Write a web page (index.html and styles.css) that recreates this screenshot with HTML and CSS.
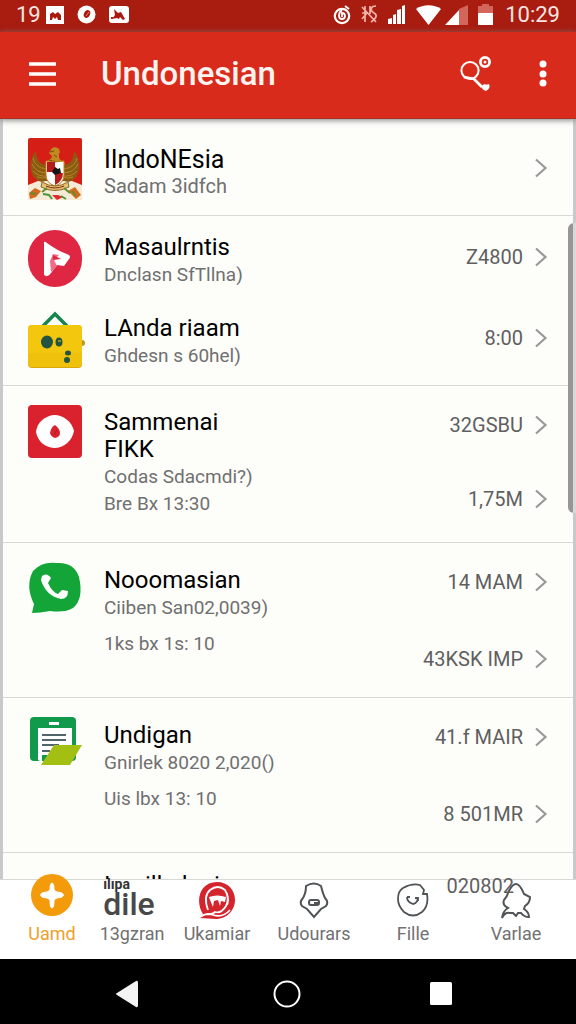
FILE: index.html
```html
<!DOCTYPE html>
<html lang="id">
<head>
<meta charset="utf-8">
<meta name="viewport" content="width=device-width, initial-scale=1">
<title>Undonesian</title>
<link rel="stylesheet" href="styles.css">
</head>
<body>
<svg class="defs" aria-hidden="true">
  <symbol id="chevron" viewBox="0 0 14 20"><path d="M2 1.500 11.500 10 2 18.500" fill="none" stroke="#999" stroke-width="2.200"/></symbol>
</svg>

<div class="status">
  <div class="status-left">
    <span>19</span>
    <svg width="18" height="18" viewBox="0 0 18 18"><path fill="#fff" d="M0 0h18v18H0z"/><path fill="#a9190f" d="M4 14V8l3-2 2 2 3-2 3 3v5h-3l-1-3-2 2-2-2-1 3z"/></svg>
    <svg width="19" height="19" viewBox="0 0 19 19"><circle cx="9.500" cy="9.500" r="9" fill="#fff"/><ellipse cx="10" cy="9" rx="3" ry="4" transform="rotate(25 10 9)" fill="#a9190f"/><path d="m9 11 3-4" stroke="#d98a82"/></svg>
    <svg width="20" height="18" viewBox="0 0 20 18"><rect width="20" height="17" rx="3" fill="#fff"/><path fill="#a9190f" d="m5 3 4 4 3-1 4 7-2 1-3-3-1 2-2-1-5 1 3-4zM2 11h2v2H2z"/></svg>
  </div>
  <div class="status-right">
    <svg width="18" height="20" viewBox="0 0 18 20" fill="none" stroke="#fff"><circle cx="9" cy="11" r="7.200" stroke-width="2.200"/><path d="M9 5c-4 3-4 9 0 9s4-6 0-6v4" stroke-width="1.800"/><path d="M12 1l4 3" stroke-width="2"/></svg>
    <svg width="17" height="19" viewBox="0 0 17 19" fill="none" stroke="#f0b3ab" stroke-width="1.700"><path d="m1 2 14 15M4 1v16M1 8h6M1 14l5-6M15 1c-6 0-6 5-2 7s2 6-3 9M9 1v8"/></svg>
    <svg width="18" height="19" viewBox="0 0 18 19" fill="#fff"><path d="M0 14l4-1v6H0zM5 10l3-1v10H5zM9 5l4-1v15H9zM14 1l3-1v19h-3z"/></svg>
    <svg class="wifi" width="25" height="20" viewBox="0 0 25 20"><path fill="#fff" d="M0 4C7-1 18-1 25 4L12.500 20z"/></svg>
    <svg width="23" height="20" viewBox="0 0 23 20"><path fill="#d2665b" d="M14 4 23 0v20h-9z"/><path fill="#fff" d="M0 20 14 5v15z"/></svg>
    <svg class="battery" width="15" height="21" viewBox="0 0 15 21"><path fill="#d2665b" d="M4 0h7v2h4v8H0V2h4z"/><path fill="#fff" d="M0 9h15v12H0z"/></svg>
    <span>10:29</span>
  </div>
</div>

<header class="appbar">
  <button class="icon-button" aria-label="Menu"><svg width="28" height="24" viewBox="0 0 28 24"><path d="M1 2h27M1 12h27M1 22h27" stroke="#fff" stroke-width="3.600"/></svg></button>
  <h1>Undonesian</h1>
  <button class="icon-button search" aria-label="Search"><svg width="32" height="38" viewBox="0 0 32 38" fill="none" stroke="#fff"><circle cx="10" cy="15.500" r="8.600" stroke-width="2"/><path d="m4 22 10 2 8 8" stroke-width="2.800"/><circle cx="25" cy="7" r="4.600" stroke-width="2.800"/><circle cx="25" cy="7" r="1.500" fill="#fff" stroke="none"/><path d="M21 31q2 0 3-2 2 1 5 0 2 4-3 7-4-1-5-5z" fill="#fff" stroke="none"/></svg></button>
  <button class="icon-button" aria-label="More"><svg width="8" height="28" viewBox="0 0 8 28" fill="#fff"><circle cx="4" cy="4" r="3.500"/><circle cx="4" cy="14" r="3.500"/><circle cx="4" cy="23" r="3.500"/></svg></button>
</header>

<main class="list">
  <section class="group intro">
    <article class="item">
      <svg class="icon" width="54" height="62" viewBox="0 0 54 62">
        <rect width="54" height="60" rx="2" fill="#d51f16"/>
        <path d="M0 47l10-4h34l10 4v15H0z" fill="#f5ead6"/>
        <g fill="#8a5c13"><path d="M19 26C13 28 8 22 8 13 0 23 1 36 9 42c4 3 8 2 12-1zM35 26c6 2 11-4 11-13 8 10 7 23-1 29-4 3-8 2-12-1z"/></g>
        <g fill="none" stroke="#b98425" stroke-width="1"><path d="M5 20q2 10 14 11M4 26q4 9 15 9M5 33q5 6 15 5M9 39q5 2 12 0M49 20q-2 10-14 11M50 26q-4 9-15 9M49 33q-5 6-15 5M45 39q-5 2-12 0"/></g>
        <path d="M18 26c1-5 6-4 6-8l-3-3 3-5q4-2 7 1l1 3q-2 2-1 5c0 4 5 3 6 7L27 29z" fill="#c08a20"/>
        <path d="M22 14l4-1M26 17l3 2M21 22l12 3" stroke="#745010"/>
        <path d="M18 23q9 2 18 0v14q0 8-9 11-9-3-9-11z" fill="#fff" stroke="#b9801d"/>
        <path d="M19 24h8v10h-8zM27 35h8q0 8-8 12z" fill="#b8191a"/><path d="m27 29 3 2 2-1 1 5-6 2-3-3z" fill="#151515"/>
        <path d="M14 44q13 8 26 0l1 5q-14 7-28 0z" fill="#e4c170" stroke="#8f6a2a"/><path d="M18 48q9 4 18 0" stroke="#7e2b14" fill="none"/>
        <path d="M1 55l6-5 6 3-5 6-6 2zM40 53l7-4 6 8-5 4z" fill="#d26a20"/><path d="M3 54q2 3 5 1M44 53l4 5M14 54l5-4M36 50l6 5" stroke="#5f8e2c" stroke-width="2" fill="none"/>
        <path d="M24 57h6l5 2-6 3z" fill="#e02b2f"/><path d="M15 56l6 1 3 4M33 58l5 3" stroke="#4b983a" stroke-width="2" fill="none"/>
      </svg>
      <div class="text"><h2>IIndoNEsia</h2><p>Sadam 3idfch</p></div>
      <div class="values"><a href="#" aria-label="Open"><svg class="chev"><use href="#chevron"/></svg></a></div>
    </article>
  </section>

  <section class="group pair">
    <article class="item">
      <svg class="icon" width="54" height="58" viewBox="0 0 54 58"><rect width="54" height="57" rx="27" fill="#df2744"/><path d="M16 12q1-1 3 1 9 7 22 12 2 2 0 4l-5 7-7-1-6 8q-3 5-7 2z" fill="#fff"/><path d="m31 25-6-1-3 7 1 11 6-6-3-6z" fill="#ee6f85"/><path d="m25 25 8 4-8 1z" fill="#df2744"/></svg>
      <div class="text"><h2>Masaulrntis</h2><p>Dnclasn SfTllna)</p></div>
      <div class="values"><a href="#">Z4800<svg class="chev"><use href="#chevron"/></svg></a></div>
    </article>
    <article class="item">
      <svg class="icon wide" width="56" height="58" viewBox="0 0 56 58"><path d="m15 15 12-12 12 12" fill="none" stroke="#16864d" stroke-width="3.500"/><circle cx="54" cy="32" r="3" fill="#bd9820"/><rect y="14" width="54" height="43" rx="4" fill="#d9a60b"/><rect y="14" width="54" height="42" rx="4" fill="#f3c70d"/><path d="M0 42h54v10q0 4-4 4H4q-4 0-4-4z" fill="#efc00c"/><g fill="#24533f"><ellipse cx="19" cy="31" rx="6" ry="6.500"/><ellipse cx="31" cy="31" rx="3.500" ry="4.500"/><ellipse cx="40" cy="42" rx="3" ry="2.500"/><ellipse cx="39" cy="49" rx="3" ry="3"/></g><path d="M30 30h3" stroke="#f3c70d"/></svg>
      <div class="text"><h2>LAnda riaam</h2><p>Ghdesn s 60hel)</p></div>
      <div class="values"><a href="#">8:00<svg class="chev"><use href="#chevron"/></svg></a></div>
    </article>
  </section>

  <section class="group tall">
    <article class="item">
      <svg class="icon" width="54" height="54" viewBox="0 0 54 54"><rect width="54" height="53" rx="4" fill="#d9222d"/><path d="M8 27C9 17 17 11 26 10 36 10 44 17 46 26 44 36 36 43 26 43 17 42 10 37 8 27z" fill="#fff"/><path d="M27 20q5 4 5 8t-5 5q-4-1-5-5 1-6 5-8z" fill="#d9222d"/><path d="m26 30 3-5" stroke="#a91d25"/></svg>
      <div class="text"><h2>Sammenai<br>FIKK</h2><p>Codas Sdacmdi?)</p><p>Bre Bx 13:30</p></div>
      <div class="values"><a href="#">32GSBU<svg class="chev"><use href="#chevron"/></svg></a><a href="#">1,75M<svg class="chev"><use href="#chevron"/></svg></a></div>
    </article>
  </section>

  <section class="group tall spaced">
    <article class="item">
      <svg class="icon" width="54" height="54" viewBox="0 0 54 54"><path d="M4 51 6 42Q-3 24 5 9 14-1 29 1q17-1 22 14 5 22-6 31-8 5-23 3-10 2-18 2z" fill="#13a538"/><path d="M14 14q5-4 9 2l-3 5q4 9 10 11l4-4 6 1q0 8-7 8Q18 34 13 18z" fill="#fff"/></svg>
      <div class="text"><h2>Nooomasian</h2><p>Ciiben San02,0039)</p><p>1ks bx 1s: 10</p></div>
      <div class="values"><a href="#">14 MAM<svg class="chev"><use href="#chevron"/></svg></a><a href="#">43KSK IMP<svg class="chev"><use href="#chevron"/></svg></a></div>
    </article>
  </section>

  <section class="group tall spaced">
    <article class="item">
      <svg class="icon wide" width="56" height="54" viewBox="0 0 56 54"><rect x="2" width="46" height="44" rx="4" fill="#119a4c"/><path d="M21 5h10v3H21z" fill="#fff"/><path d="M10 11h34v27H14v7l-4-2z" fill="#fff"/><path d="M14 18h24M14 23h24M14 28h17M14 34h8" stroke="#53656c" stroke-width="2"/><path d="M26 28h28L42 48H13z" fill="#a3bf12"/></svg>
      <div class="text"><h2>Undigan</h2><p>Gnirlek 8020 2,020()</p><p>Uis lbx 13: 10</p></div>
      <div class="values"><a href="#">41.f MAIR<svg class="chev"><use href="#chevron"/></svg></a><a href="#">8 501MR<svg class="chev"><use href="#chevron"/></svg></a></div>
    </article>
  </section>

  <section class="group last">
    <article class="item"><div class="icon blank"></div><div class="text"><h2>Inarilkalani</h2></div></article>
  </section>
</main>
<div class="scroll-thumb"></div>

<nav class="tabs">
  <a class="tab active" href="#"><span class="glyph"><svg width="42" height="44" viewBox="0 0 42 44"><circle cx="21" cy="22" r="21" fill="#f49b0b"/><path d="M21 10q2 0 2 7 1 2 8 3 3 2 0 4-7 1-8 3 0 8-2 8t-2-8q-1-2-8-3-3-2 0-4 7-1 8-3 0-7 2-7z" fill="#fff" stroke="#fff"/></svg></span><span>Uamd</span></a>
  <a class="tab" href="#"><span class="glyph word">dile<small>ılıpa</small></span><span>13gzran</span></a>
  <a class="tab" href="#"><span class="glyph"><svg width="38" height="38" viewBox="0 0 38 38"><path d="M19 0c11 0 18 8 18 18S29 37 18 37l-16-1 3-4C-3 20 1 0 19 0z" fill="#d4252e"/><path d="M10 28Q5 14 12 8q8-6 15 0 5 8 1 16-5 8-11 6-3 3-8 2M2 35q8-5 13-2 10 3 17-5M29 12q2 6 0 11" fill="none" stroke="#fff" stroke-width="1.800"/><path d="M11 15q8-3 17 0l-1 5-4-1-1 5-2-6-4 1-1 6-3-7z" fill="#fff"/></svg></span><span>Ukamiar</span></a>
  <a class="tab" href="#"><span class="glyph"><svg width="30" height="38" viewBox="0 0 30 38" fill="none" stroke="#505456" stroke-width="2"><path d="M7 4q8-5 15 0 2 8 4 12 4 4 1 8l-5 3-7 8-7-8-5-3q-3-4 1-8Q7 11 7 4z"/><rect x="10" y="18" width="10" height="5" rx="2"/><path d="M15 21h4"/></svg></span><span>Udourars</span></a>
  <a class="tab" href="#"><span class="glyph"><svg width="32" height="36" viewBox="0 0 32 36" fill="none" stroke="#505456" stroke-width="1.800"><path d="M6 5q9-5 17-3l4 5-1 4h4q2 12-5 18-9 7-18 0-6-6-6-13 0-8 5-11M10 14q0 5 6 7 5-1 5-7M10 14h3M18 15h3v3"/></svg></span><span>Fille</span></a>
  <a class="tab" href="#"><span class="glyph"><svg width="32" height="36" viewBox="0 0 32 36" fill="none" stroke="#505456" stroke-width="2"><path d="M8 10q4-9 8-9 4 0 8 10l6 3q0 6-5 9l-1 3q5 3 5 8-5 0-8-4l-3 0-2 3-3-3-3 0q-5-1-8 5 1-7 6-10-6-3-4-8 3-3 4-7z"/></svg><em>020802</em></span><span>Varlae</span></a>
</nav>

<footer class="system">
  <button aria-label="Back"><svg width="24" height="28" viewBox="0 0 24 28"><path d="M21 1q2-1 2 2v22q0 3-2 2L2 15q-2-1 0-2z" fill="#f4f4f4"/></svg></button>
  <button class="home" aria-label="Home"><svg width="28" height="28" viewBox="0 0 28 28"><circle cx="14" cy="14" r="12.500" fill="none" stroke="#fff" stroke-width="2"/></svg></button>
  <button aria-label="Recent apps"><svg width="24" height="24" viewBox="0 0 24 24"><rect x="1" width="22" height="23" rx="1.500" fill="#fff"/></svg></button>
</footer>
</body>
</html>
```

FILE: styles.css
```css
* { box-sizing: border-box; }
body {
  margin: 0;
  height: 100vh;
  display: flex;
  flex-direction: column;
  position: relative;
  overflow: hidden;
  background: #fdfdfa;
  font-family: Roboto, "Noto Sans", sans-serif;
  color: #000;
}
h1, h2, p { margin: 0; font-weight: 400; }
a { color: inherit; text-decoration: none; }
button { border: 0; padding: 0; background: none; display: flex; }
svg { display: block; flex: none; }
.defs { position: absolute; width: 0; height: 0; }

.status {
  flex: none;
  height: 32px;
  padding: 0 16px 3px;
  display: flex;
  justify-content: space-between;
  align-items: center;
  background: #a91c10;
  color: #fbe5e2;
  font-size: 22px;
}
.status-left, .status-right { display: flex; align-items: center; }
.status-left { gap: 13px; }
.status-left span { margin-right: -8px; }
.status-right { gap: 10px; }
.wifi { margin-right: -6px; }
.battery { margin-right: 2px; }

.appbar {
  flex: none;
  height: 87px;
  padding: 0 29px 2px 28px;
  display: flex;
  align-items: center;
  background: #d92b1b;
  border-bottom: 1px solid #a83328;
  box-shadow: 0 1px 6px #777;
  z-index: 1;
}
.appbar h1 {
  flex: 1;
  margin-left: 45px;
  font-size: 33px;
  line-height: 40px;
  font-weight: 500;
  color: #fff3f0;
}
.search { margin-right: 47px; }

.list {
  flex: 1;
  min-height: 0;
  overflow: hidden;
  border-left: 3px solid #c9c9c9;
  border-right: 3px solid #c9c9c9;
}
.group { padding: 19px 25px 0; border-bottom: 1px solid #d8d9d7; }
.item { display: flex; }
.icon { flex: none; overflow: visible; }
.blank { width: 54px; }
.text { flex: 1; margin-left: 22px; white-space: nowrap; }
.wide + .text { margin-left: 20px; }
h2 { font-size: 24px; line-height: 27px; }
p { font-size: 19px; line-height: 27px; color: #707070; }
.text, .values { padding-top: 4px; }
.values a {
  display: flex;
  align-items: center;
  justify-content: flex-end;
  gap: 11px;
  height: 30px;
  font-size: 20px;
  color: #5f5f5f;
  white-space: nowrap;
}
.values a + a { margin-top: 44px; }
.chev { width: 14px; height: 20px; }

.intro { padding-bottom: 15px; }
.intro h2 { font-size: 25px; }
.intro p { font-size: 20px; }
.intro .text { padding-top: 8px; }
.intro .values { padding-top: 15px; }
.pair { padding-top: 14px; padding-bottom: 16px; }
.pair .item + .item { margin-top: 23px; }
.pair .values { padding-top: 12px; }
.tall .item { min-height: 137px; }
.tall .values { padding-top: 5px; }
.spaced .item { min-height: 135px; }
.spaced .text { padding-top: 5px; }
.spaced .values a + a { margin-top: 47px; }
.spaced p + p { margin-top: 9px; }
.last { padding-top: 15px; }

.scroll-thumb {
  position: absolute;
  right: 0;
  top: 223px;
  width: 8px;
  height: 290px;
  border-radius: 6px 0 0 6px;
  background: linear-gradient(90deg, #999595 5px, #d9d9d9 5px);
}

.tabs {
  flex: none;
  height: 79px;
  padding: 0 6px 0 10px;
  display: grid;
  grid-template-columns: 84fr 76fr 94fr 100fr 98fr 108fr;
  background: #fff;
  box-shadow: 0 -1px 0 #d8d9d7;
  z-index: 1;
}
.tab {
  display: flex;
  flex-direction: column;
  align-items: center;
  font-size: 18px;
  line-height: 24px;
  color: #717171;
}
.active { color: #eda02b; }
.glyph {
  position: relative;
  height: 42px;
  display: flex;
  align-items: center;
  justify-content: center;
}
.active .glyph svg { margin-top: -12px; }
.word { font-size: 32px; font-weight: 500; color: #484848; padding: 6px 6px 0 0; }
.word small { position: absolute; left: 0; top: -6px; font-size: 14px; line-height: 20px; font-weight: 700; color: #333; }
.glyph em {
  position: absolute;
  right: 18px;
  top: -6px;
  font-style: normal;
  font-size: 20px;
  color: #606060;
}

.system {
  flex: none;
  height: 65px;
  padding: 4px 123px 0 115px;
  display: flex;
  align-items: center;
  justify-content: space-between;
  background: #000;
}
.home { margin-left: 6px; }
```
